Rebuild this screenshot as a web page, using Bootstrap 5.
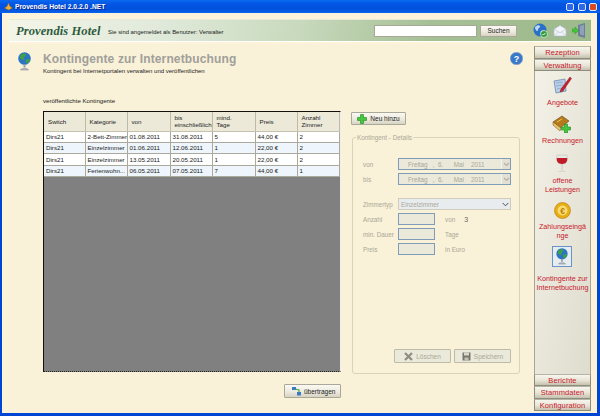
<!DOCTYPE html>
<html lang="de">
<head>
  <meta charset="UTF-8">
  <title>Provendis Hotel</title>
  <meta name="viewport" content="width=device-width, initial-scale=1">
  <link href="https://cdn.jsdelivr.net/npm/bootstrap@5.3.0/dist/css/bootstrap.min.css" rel="stylesheet">
  <style>
    html, body { width: 600px; height: 416px; overflow: hidden; margin: 0; background: #0046d5; }
    body { font-family: "Liberation Sans", Arial, sans-serif; font-size: 7px; line-height: 9px; color: #222; }
    .app-frame { width: 600px; height: 416px; }
    .app-title { height: 13px; flex: none; padding: 0 3px 0 4px; gap: 2px; color: #fff; font-weight: 700; font-size: 6.7px; text-shadow: 1px 1px 0 #0a2a90;
      background: linear-gradient(180deg, #0a6af0 0%, #0355e4 30%, #0151dd 70%, #0a62ec 100%); }
    .win-btn { width: 8px; height: 8px; border: 1px solid #dfe8ff; border-radius: 2px; background: #2f68e6; margin-left: 1.500px; }
    .win-btn-close { background: #dd4a20; }
    .app-body { min-height: 0; margin: 0 3px 3px 2px; padding: 6px 6px 0 7px; background: #fdf2da; }
    .top-band { height: 23px; flex: none; padding-left: 7px; border-top: 1px solid #e8ecd6; border-bottom: 1px solid #fff;
      background: linear-gradient(100deg, #f3f5e8 0%, #e1eadb 25%, #c8d9bd 50%, #a6c095 72%, #9dba8c 100%); }
    .brand-name { width: 92px; flex: none; white-space: nowrap; font-family: "Liberation Serif", serif; font-style: italic; font-weight: 700; font-size: 12.500px; letter-spacing: .1px; line-height: 20px; color: #2d5a3c; }
    .brand-note { font-size: 5.900px; color: #222; margin-top: 4px; white-space: nowrap; }
    .search-box { width: 103px; height: 12px; padding: 0; border: 1px solid #a7a797; border-radius: 0; background: #fff; }
    .win-button { display: flex; align-items: center; justify-content: center; padding: 0; border: 1px solid #aaa999; border-radius: 1px; font-size: 6.500px; line-height: 9px; color: #222;
      background: linear-gradient(180deg, #faf9f3 0%, #ece9dc 60%, #d6d3c3 100%); }
    .search-btn { width: 37px; height: 12px; margin: 0 16px 0 3px; }
    .band-envelope { margin: 0 5px; }
    .band-door { margin-right: 5px; }
    .main-zone { min-height: 0; margin-top: 2px; background: #f9f1d8; }
    .content-pane { padding: 8px 11px 0 9px; min-width: 0; }
    .pane-globe { width: 25px; }
    .page-title { margin: 0; height: 14px; font-size: 12px; line-height: 14px; font-weight: 700; letter-spacing: .13px; color: #a0a09a; }
    .page-sub { font-size: 6px; margin-top: 1px; color: #222; }
    .grid-label { margin: 20px 0 6px 25px; font-size: 6.100px; }
    .work-row { margin-left: 25px; gap: 10px; }
    .grid-col { width: 298px; }
    .grid-wrap { height: 261px; background: #808080; border-top: 1px solid #111; border-left: 1px solid #111; border-bottom: 1px dotted #222; border-right: 1px solid #eee; }
    .grid-table { --bs-table-bg: transparent; table-layout: fixed; font-size: 6.200px; line-height: 7.500px; color: #222; margin: 0; }
    .grid-table th { height: 19px; padding: 0 0 0 4px; font-weight: 400; vertical-align: middle; background: #ece9d8; border: 0; border-right: 1px solid #bdbaa8; border-bottom: 1px solid #c5c2b0; box-shadow: none; }
    .grid-table td { height: 11.400px; padding: 0 0 0 2px; white-space: nowrap; overflow: hidden; border: 0; border-right: 1px solid #aaa99b; border-bottom: 1px solid #aaa99b; background: #fff; box-shadow: none; vertical-align: middle; }
    .grid-table tr:nth-child(even) td { background: #eef5fc; }
    .send-btn { width: 57px; height: 14px; margin: 12px 0 0 auto; gap: 2px; justify-content: flex-start; padding-left: 6px; }
    .detail-col { width: 169px; padding-top: 1px; }
    .add-btn { width: 55px; height: 13px; gap: 3px; }
    .detail-box { height: 241px; margin: 8px 0 0 1px; padding: 0 8px 0 10px; border: 1px solid #d8d4b6; border-radius: 3px; color: #aaa897; min-width: 0; }
    .detail-box legend { float: none; width: auto; margin: 0 0 0 -7px; padding: 0 1px; font-size: 6.300px; line-height: 9px; color: #aaa897; }
    .field-row { height: 12px; margin-bottom: 3px; }
    .field-row-apart { margin-top: 13px; }
    .field-name { width: 35px; flex: none; font-size: 6.300px; }
    .date-field { width: 113px; height: 12px; padding-left: 9px; border: 1px solid #7f9db9; background: #ebe9da; font-size: 6.300px; }
    .date-field span { flex: none; }
    .drop-arrow { width: 9px; height: 10px; margin-left: auto; background: #e3e1d3; border-left: 1px solid #f5f4ec; }
    .type-select { width: 113px; height: 12px; padding: 0 0 0 2px; border: 1px solid #cfccbc; border-radius: 0; font-size: 6.300px; line-height: 9px; color: #aaa897; background-color: #ebe9da; background-size: 7px 7px; background-position: right 1px center; }
    .num-input { width: 37px; height: 12px; flex: none; padding: 0; border: 1px solid #7f9db9; border-radius: 0; background: #ebe9da; }
    .num-input:disabled { background: #ebe9da; }
    .unit-name { margin-left: 10px; font-size: 6.300px; }
    .unit-val { margin-left: 9px; color: #666; font-size: 7px; }
    .detail-actions { margin-top: 94px; gap: 3px; padding-left: 31px; }
    .off-btn { width: 57px; height: 14px; gap: 3px; color: #aaa897; border-color: #bdbbaa; background: #ebe9da; }
    .side-rail { width: 57px; flex: none; margin-top: 2px; margin-bottom: 2px; color: #c8182c; text-align: center; }
    .rail-tab { height: 12.500px; flex: none; line-height: 12px; font-size: 7.500px; letter-spacing: .1px; border: 1px solid #8f8d7d; border-top-color: #b5b3a3; background: linear-gradient(180deg, #f7f6ee 0%, #e7e4d6 55%, #c4c1ae 100%); }
    .rail-items { min-height: 0; padding-top: 5px; gap: 8px; border-left: 1px solid #a7a594; border-right: 1px solid #a7a594; background: linear-gradient(100deg, #f4f2e8, #dedccd); font-size: 7.200px; line-height: 9px; }
    .rail-text { margin-top: 3px; }
    .rail-entry-picked { margin-top: -2px; }
    .rail-pick { width: 20px; height: 21px; border: 1px solid #6c93c8; background: #e6edf1; }
    .rail-text-picked { margin-top: 7px; }
  </style>
</head>
<body>
  <div class="app-frame d-flex flex-column">
    <div class="app-title d-flex align-items-center">
      <svg width="9" height="9" viewBox="0 0 9 9"><path d="M4.500 1L6 4.500 8.500 6 4.500 8 .5 6 3 4.500z" fill="#f0b030" stroke="#a86a10" stroke-width=".5"/></svg>
      <span>Provendis Hotel 2.0.2.0 .NET</span>
      <span class="win-btn ms-auto"></span><span class="win-btn"></span><span class="win-btn win-btn-close"></span>
    </div>
    <div class="app-body flex-grow-1 d-flex flex-column">
      <div class="top-band d-flex align-items-center">
        <div class="brand-name">Provendis Hotel</div>
        <div class="brand-note">Sie sind angemeldet als Benutzer: Verwalter</div>
        <input class="search-box ms-auto" type="text">
        <button class="win-button search-btn" type="button">Suchen</button>
        <svg width="15" height="15" viewBox="0 0 15 15"><circle cx="7" cy="7" r="6.500" fill="#2a6fc8"/><path d="M2 4c2-2 4-2 5-1s-2 2-2 4-3 1-3-3zM8 8c2-1 4 0 4 1s-2 3-3 3-2-3-1-4z" fill="#bcd8ef"/><circle cx="11" cy="11" r="3.500" fill="#2f9e3a" stroke="#fff" stroke-width=".6"/><path d="M9.500 11l1 1 2-2" stroke="#fff" fill="none"/></svg>
        <svg class="band-envelope" width="14" height="13" viewBox="0 0 15 13"><path d="M1 5l6.500-4L14 5v7.500H1z" fill="#f2f4f8" stroke="#a9b4c4" stroke-width=".7"/><path d="M1 5l6.500 4L14 5M1 12.500l5-4.500M14 12.500L9 8" fill="none" stroke="#b8c2d0" stroke-width=".7"/></svg>
        <svg class="band-door" width="14" height="15" viewBox="0 0 14 15"><path d="M6 2l7-2v15l-7-2z" fill="#6d7f9a"/><path d="M8 3l4-1.500v11L8 11.500z" fill="#8fa0b8"/><path d="M0 6h3V4l3.500 3.500L3 11V9H0z" fill="#43c73a" stroke="#1f8a20" stroke-width=".4"/></svg>
      </div>
      <div class="main-zone flex-grow-1 d-flex">
        <div class="content-pane flex-grow-1">
          <div class="d-flex">
            <div class="pane-globe">
              <svg width="13" height="19" viewBox="0 0 13 19"><circle cx="6.500" cy="6.500" r="6.300" fill="#2c74c6"/><path d="M2 3.500C4 1 7 1 8 2S6 4.500 6 6.500 3 8 2 6zM8 7.500c2-1 4-.5 4 .5s-2 3.500-3 3.500-2-3-1-4z" fill="#3ea04a"/><path d="M5.500 12.500h2v3h-2z" fill="#9aa0a8"/><path d="M2.500 18c0-2 8-2 8 0z" fill="#b8bcc4" stroke="#7d828c" stroke-width=".5"/></svg>
            </div>
            <div>
              <h1 class="page-title">Kontingente zur Internetbuchung</h1>
              <div class="page-sub">Kontingent bei Internetportalen verwalten und veröffentlichen</div>
            </div>
            <svg class="ms-auto" width="13" height="13" viewBox="0 0 13 13"><circle cx="6.500" cy="6.500" r="6.300" fill="#3a78c8" stroke="#9fb2c8" stroke-width=".6"/><text x="6.500" y="9.800" text-anchor="middle" font-family="Liberation Sans" font-weight="700" font-size="9" fill="#fff">?</text></svg>
          </div>
          <div class="grid-label">veröffentlichte Kontingente</div>
          <div class="work-row d-flex">
            <div class="grid-col">
              <div class="grid-wrap">
                <table class="table grid-table">
                  <colgroup><col style="width:41px"><col style="width:42px"><col style="width:43px"><col style="width:42px"><col style="width:43px"><col style="width:42px"><col></colgroup>
                  <thead>
                    <tr><th>Switch</th><th>Kategorie</th><th>von</th><th>bis<br>einschließlich</th><th>mind.<br>Tage</th><th>Preis</th><th>Anzahl<br>Zimmer</th></tr>
                  </thead>
                  <tbody>
                    <tr><td>Dirs21</td><td>2-Bett-Zimmer</td><td>01.08.2011</td><td>31.08.2011</td><td>5</td><td>44,00 €</td><td>2</td></tr>
                    <tr><td>Dirs21</td><td>Einzelzimmer</td><td>01.06.2011</td><td>12.06.2011</td><td>1</td><td>22,00 €</td><td>2</td></tr>
                    <tr><td>Dirs21</td><td>Einzelzimmer</td><td>13.05.2011</td><td>20.05.2011</td><td>1</td><td>22,00 €</td><td>2</td></tr>
                    <tr><td>Dirs21</td><td>Ferienwohn...</td><td>06.05.2011</td><td>07.05.2011</td><td>7</td><td>44,00 €</td><td>1</td></tr>
                  </tbody>
                </table>
              </div>
              <button class="win-button send-btn" type="button">
                <svg width="11" height="10" viewBox="0 0 11 10"><path d="M1 1h4v3H1z" fill="#3b78c9"/><path d="M4 3l4 1v2" fill="none" stroke="#4aa84a" stroke-width="1.200"/><path d="M6 6h4v3.500H6z" fill="#3b78c9"/></svg>
                <span>übertragen</span>
              </button>
            </div>
            <div class="detail-col">
              <button class="win-button add-btn" type="button">
                <svg width="10" height="10" viewBox="0 0 10 10"><path d="M3.500.5h3v3h3v3h-3v3h-3v-3h-3v-3h3z" fill="#45c63c" stroke="#1e8a22" stroke-width=".6"/></svg>
                <span>Neu hinzu</span>
              </button>
              <fieldset class="detail-box">
                <legend>Kontingent - Details</legend>
                <div class="field-row d-flex align-items-center mt-3">
                  <div class="field-name">von</div>
                  <div class="date-field d-flex align-items-center"><span>Freitag&nbsp;&nbsp;&nbsp;,&nbsp;&nbsp;6.&nbsp;&nbsp;&nbsp;&nbsp;&nbsp;&nbsp;Mai&nbsp;&nbsp;&nbsp;&nbsp;2011</span><span class="drop-arrow d-flex align-items-center justify-content-center"><svg width="7" height="5" viewBox="0 0 7 5"><path d="M1 1l2.500 2.500L6 1" fill="none" stroke="#b5b3a6" stroke-width="1.200"/></svg></span></div>
                </div>
                <div class="field-row d-flex align-items-center">
                  <div class="field-name">bis</div>
                  <div class="date-field d-flex align-items-center"><span>Freitag&nbsp;&nbsp;&nbsp;,&nbsp;&nbsp;6.&nbsp;&nbsp;&nbsp;&nbsp;&nbsp;&nbsp;Mai&nbsp;&nbsp;&nbsp;&nbsp;2011</span><span class="drop-arrow d-flex align-items-center justify-content-center"><svg width="7" height="5" viewBox="0 0 7 5"><path d="M1 1l2.500 2.500L6 1" fill="none" stroke="#b5b3a6" stroke-width="1.200"/></svg></span></div>
                </div>
                <div class="field-row field-row-apart d-flex align-items-center">
                  <div class="field-name">Zimmertyp</div>
                  <select class="form-select type-select" disabled><option>Einzelzimmer</option></select>
                </div>
                <div class="field-row d-flex align-items-center">
                  <div class="field-name">Anzahl</div>
                  <input class="form-control num-input" type="text" disabled>
                  <span class="unit-name">von</span><span class="unit-val">3</span>
                </div>
                <div class="field-row d-flex align-items-center">
                  <div class="field-name">min. Dauer</div>
                  <input class="form-control num-input" type="text" disabled>
                  <span class="unit-name">Tage</span>
                </div>
                <div class="field-row d-flex align-items-center">
                  <div class="field-name">Preis</div>
                  <input class="form-control num-input" type="text" disabled>
                  <span class="unit-name">in Euro</span>
                </div>
                <div class="detail-actions d-flex">
                  <button class="win-button off-btn" type="button" disabled>
                    <svg width="9" height="9" viewBox="0 0 9 9"><path d="M1 1l7 7M8 1L1 8" stroke="#8e8d80" stroke-width="2.200"/></svg>
                    <span>Löschen</span>
                  </button>
                  <button class="win-button off-btn" type="button" disabled>
                    <svg width="9" height="9" viewBox="0 0 9 9"><path d="M.5.5h8v8h-8z" fill="#77766c"/><path d="M2 .5h5v3H2z" fill="#d9d7c9"/><path d="M2.500 5.500h4v3h-4z" fill="#c4c2b4"/></svg>
                    <span>Speichern</span>
                  </button>
                </div>
              </fieldset>
            </div>
          </div>
        </div>
        <div class="side-rail d-flex flex-column">
          <div class="rail-tab">Rezeption</div>
          <div class="rail-tab">Verwaltung</div>
          <div class="rail-items flex-grow-1 d-flex flex-column align-items-center">
            <div>
              <svg width="19" height="19" viewBox="0 0 19 19"><path d="M1 5l11-2 1 12-10 2z" fill="#b8cfe8" stroke="#5d7ea8" stroke-width=".7"/><path d="M3 7l7-1M3 10l7-1M4 13l5-1" stroke="#7d97b8" stroke-width=".6"/><path d="M17 1L8 13l-1 3 3-1L18.500 2.500z" fill="#c8202c" stroke="#7a1018" stroke-width=".4"/></svg>
              <div class="rail-text">Angebote</div>
            </div>
            <div>
              <svg width="20" height="18" viewBox="0 0 20 18"><path d="M1 7l9-6 7 5-9 7z" fill="#b57a1c" stroke="#6c4508" stroke-width=".6"/><path d="M1 7v3l7 6 1-3z" fill="#e8c470" stroke="#6c4508" stroke-width=".5"/><path d="M5 7l5-3" stroke="#e6c060" stroke-width="1"/><path d="M12.500 9h3v3h3v3h-3v3h-3v-3h-3v-3h3z" fill="#45c63c" stroke="#1e8a22" stroke-width=".6"/></svg>
              <div class="rail-text">Rechnungen</div>
            </div>
            <div>
              <svg width="14" height="20" viewBox="0 0 14 20"><path d="M2 2h10c1 5 0 9-5 9S1 7 2 2z" fill="#e8e8e4" stroke="#b8b8b0" stroke-width=".5"/><path d="M1.800 5h10.400c.4 3-1 6-5.200 6S1.400 8 1.800 5z" fill="#c01c28"/><path d="M6.500 11h1v6h-1z" fill="#c8c8c0"/><path d="M3 19c0-2 8-2 8 0z" fill="#d8d8d0"/></svg>
              <div class="rail-text">offene<br>Leistungen</div>
            </div>
            <div>
              <svg width="17" height="17" viewBox="0 0 17 17"><circle cx="8.500" cy="8.500" r="8" fill="#e8ac14" stroke="#b07e08" stroke-width=".6"/><circle cx="8.500" cy="8.500" r="5" fill="#f8dc70"/><text x="8.500" y="11.500" text-anchor="middle" font-family="Liberation Sans" font-weight="700" font-size="8.500" fill="#b87c08">€</text></svg>
              <div class="rail-text">Zahlungseingä<br>nge</div>
            </div>
            <div class="rail-entry-picked d-flex flex-column align-items-center">
              <div class="rail-pick d-flex align-items-center justify-content-center">
                <svg width="12" height="17" viewBox="0 0 13 19"><circle cx="6.500" cy="6.500" r="6.300" fill="#2c74c6"/><path d="M2 3.500C4 1 7 1 8 2S6 4.500 6 6.500 3 8 2 6zM8 7.500c2-1 4-.5 4 .5s-2 3.500-3 3.500-2-3-1-4z" fill="#3ea04a"/><path d="M5.500 12.500h2v3h-2z" fill="#9aa0a8"/><path d="M2.500 18c0-2 8-2 8 0z" fill="#b8bcc4" stroke="#7d828c" stroke-width=".5"/></svg>
              </div>
              <div class="rail-text-picked">Kontingente zur<br>Internetbuchung</div>
            </div>
          </div>
          <div class="rail-tab">Berichte</div>
          <div class="rail-tab">Stammdaten</div>
          <div class="rail-tab">Konfiguration</div>
        </div>
      </div>
    </div>
  </div>
  <script src="https://cdn.jsdelivr.net/npm/bootstrap@5.3.0/dist/js/bootstrap.bundle.min.js"></script>
</body>
</html>
